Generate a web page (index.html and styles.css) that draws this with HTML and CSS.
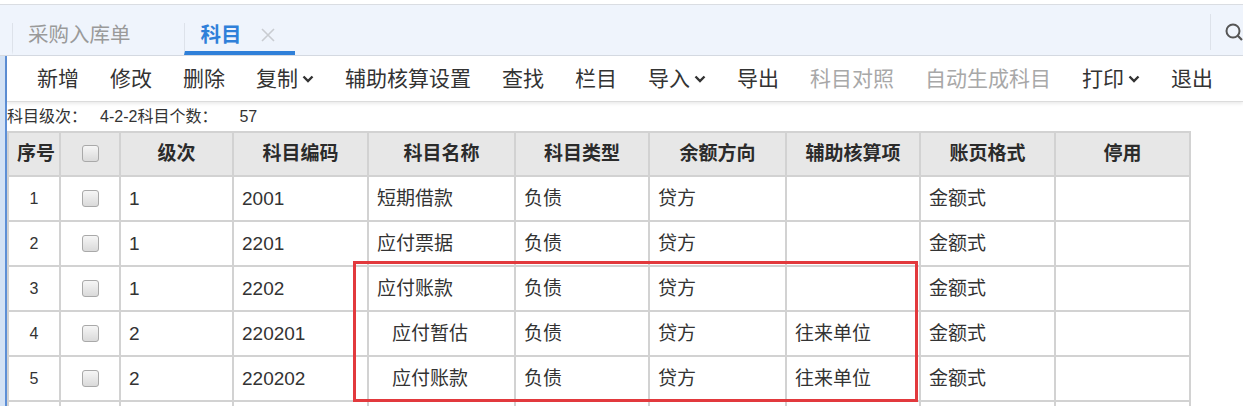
FILE: index.html
```html
<!DOCTYPE html>
<html lang="zh-CN">
<head>
<meta charset="utf-8">
<title>科目</title>
<link rel="stylesheet" href="styles.css">
</head>
<body>
<div class="tabbar">
  <div class="tab">
    <span class="tab-label">采购入库单</span>
    <span class="tab-close is-hidden"></span>
  </div>
  <div class="tab is-active">
    <span class="tab-label">科目</span>
    <span class="tab-close">
      <svg width="16" height="16" viewBox="0 0 16 16"><path d="M2 2 L14 14 M14 2 L2 14" stroke="#c9ccd1" stroke-width="1.6" fill="none"/></svg>
    </span>
  </div>
  <div class="search">
    <svg width="19" height="20" viewBox="0 0 19 20"><circle cx="9" cy="9" r="6.5" stroke="#555" stroke-width="2" fill="none"/><path d="M13.8 13.8 L18 18" stroke="#555" stroke-width="2.2"/></svg>
  </div>
</div>

<div class="main">
  <div class="edge"></div>
  <div class="panel">
    <div class="toolbar">
      <span class="tool">新增</span>
      <span class="tool">修改</span>
      <span class="tool">删除</span>
      <span class="tool">复制<svg class="chev" width="12" height="8" viewBox="0 0 12 8"><path d="M1.5 1.5 L6 6 L10.5 1.5" stroke="#333" stroke-width="2.4" fill="none"/></svg></span>
      <span class="tool">辅助核算设置</span>
      <span class="tool">查找</span>
      <span class="tool">栏目</span>
      <span class="tool">导入<svg class="chev" width="12" height="8" viewBox="0 0 12 8"><path d="M1.5 1.5 L6 6 L10.5 1.5" stroke="#333" stroke-width="2.4" fill="none"/></svg></span>
      <span class="tool">导出</span>
      <span class="tool is-disabled">科目对照</span>
      <span class="tool is-disabled">自动生成科目</span>
      <span class="tool">打印<svg class="chev" width="12" height="8" viewBox="0 0 12 8"><path d="M1.5 1.5 L6 6 L10.5 1.5" stroke="#333" stroke-width="2.4" fill="none"/></svg></span>
      <span class="tool">退出</span>
    </div>

    <div class="info"><span>科目级次：</span><span class="info-val">4-2-2</span><span>科目个数：</span><span class="info-val info-val-wide">57</span></div>

    <table class="grid">
      <colgroup>
        <col class="c-no"><col class="c-chk"><col class="c-lv"><col class="c-code"><col class="c-name"><col class="c-type"><col class="c-dir"><col class="c-aux"><col class="c-fmt"><col class="c-stop">
      </colgroup>
      <thead>
        <tr>
          <th>序号</th><th><span class="chk"></span></th><th>级次</th><th>科目编码</th><th>科目名称</th><th>科目类型</th><th>余额方向</th><th>辅助核算项</th><th>账页格式</th><th>停用</th>
        </tr>
      </thead>
      <tbody>
        <tr><td class="no">1</td><td class="ck"><span class="chk"></span></td><td>1</td><td>2001</td><td>短期借款</td><td>负债</td><td>贷方</td><td></td><td>金额式</td><td></td></tr>
        <tr><td class="no">2</td><td class="ck"><span class="chk"></span></td><td>1</td><td>2201</td><td>应付票据</td><td>负债</td><td>贷方</td><td></td><td>金额式</td><td></td></tr>
        <tr><td class="no">3</td><td class="ck"><span class="chk"></span></td><td>1</td><td>2202</td><td>应付账款</td><td>负债</td><td>贷方</td><td></td><td>金额式</td><td></td></tr>
        <tr><td class="no">4</td><td class="ck"><span class="chk"></span></td><td>2</td><td>220201</td><td class="sub">应付暂估</td><td>负债</td><td>贷方</td><td>往来单位</td><td>金额式</td><td></td></tr>
        <tr><td class="no">5</td><td class="ck"><span class="chk"></span></td><td>2</td><td>220202</td><td class="sub">应付账款</td><td>负债</td><td>贷方</td><td>往来单位</td><td>金额式</td><td></td></tr>
        <tr><td class="no"></td><td class="ck"></td><td></td><td></td><td></td><td></td><td></td><td></td><td></td><td></td></tr>
      </tbody>
    </table>
  </div>
</div>

<div class="mark"></div>
</body>
</html>
```

FILE: styles.css
```css
* { box-sizing: border-box; }

html, body {
  margin: 0;
  padding: 0;
  background: #ffffff;
  overflow: hidden;
}

body {
  width: 1243px;
  height: 406px;
  font-family: "Liberation Sans", "Noto Sans CJK SC", sans-serif;
  color: #333;
}

/* ---------- tab bar ---------- */
.tabbar {
  margin-top: 4px;
  height: 52px;
  border-top: 1px solid #dadde2;
  border-bottom: 1px solid #d5dae2;
  background: #eff4fc;
  display: flex;
  align-items: flex-end;
  padding-left: 12px;
}

.tab {
  height: 32px;
  border-left: 1px solid #dde2ea;
  border-bottom: 4px solid transparent;
  display: flex;
  align-items: flex-start;
  padding-left: 15px;
  padding-right: 19px;
}

.tab-label {
  font-size: 20.5px;
  line-height: 24px;
  color: #9a9a9a;
}

.tab-close {
  width: 16px;
  height: 16px;
  margin-left: 18px;
  margin-top: 4px;
  display: flex;
}

.tab-close.is-hidden { visibility: hidden; }

.tab.is-active { border-bottom-color: #2f80d9; padding-left: 16px; }
.tab.is-active .tab-label {
  color: #2f80d9;
  font-weight: bold;
}

.search {
  margin-left: auto;
  align-self: flex-start;
  margin-top: 9px;
  height: 36px;
  border-left: 1px solid #dde2ea;
  padding-left: 13px;
  display: flex;
  align-items: center;
}

.search svg { overflow: visible; }

/* ---------- main ---------- */
.main {
  display: flex;
  height: 350px;
}

.edge {
  width: 7px;
  flex: none;
  background: #d3e2f5;
  border-right: 2px solid #5d8fd6;
}

.panel {
  flex: 1;
  min-width: 0;
}

.toolbar {
  height: 46px;
  border-bottom: 1px solid #dcdcdc;
  box-shadow: 0 2px 3px rgba(0, 0, 0, 0.08);
  display: flex;
  align-items: center;
  gap: 31px;
  padding-left: 30px;
  font-size: 21px;
  color: #333;
}

.tool {
  display: flex;
  align-items: center;
  line-height: 28px;
  white-space: nowrap;
}

.tool.is-disabled { color: #a8a8a8; }

.chev { margin-left: 4px; }

.info {
  height: 29px;
  line-height: 30px;
  font-size: 16px;
  color: #333;
  white-space: nowrap;
}

.info-val { margin-left: 13px; }
.info-val-wide { margin-left: 22px; }

/* ---------- grid ---------- */
.grid {
  border-collapse: collapse;
  table-layout: fixed;
  width: 1182px;
  font-size: 19px;
}

.c-no { width: 52px; }
.c-chk { width: 60px; }
.c-lv { width: 113px; }
.c-code { width: 135px; }
.c-name { width: 147px; }
.c-type { width: 134px; }
.c-dir { width: 137px; }
.c-aux { width: 134px; }
.c-fmt { width: 135px; }
.c-stop { width: 135px; }

.grid th,
.grid td {
  border: 2px solid #d2d2d2;
  padding: 0 8px;
  white-space: nowrap;
  overflow: hidden;
}

.grid th {
  background: #e7e7e7;
  font-weight: bold;
  text-align: center;
  height: 44px;
  line-height: 40px;
  color: #2b2b2b;
}

.grid td {
  height: 45px;
  line-height: 41px;
  text-align: left;
  color: #333;
}

.grid td.no {
  text-align: center;
  font-size: 16px;
  padding: 0;
}

.grid th:nth-child(2),
.grid td.ck {
  text-align: center;
  padding: 0;
}

.grid td.sub { padding-left: 23px; }

.chk {
  display: inline-block;
  width: 17px;
  height: 17px;
  border: 1px solid #a9a9a9;
  border-radius: 3px;
  background: linear-gradient(#f6f6f6, #dadada);
  vertical-align: middle;
  margin-top: -3px;
}

/* ---------- annotation ---------- */
.mark {
  position: absolute;
  left: 353px;
  top: 261px;
  width: 565px;
  height: 141px;
  border: 3px solid #e2393d;
}
```
